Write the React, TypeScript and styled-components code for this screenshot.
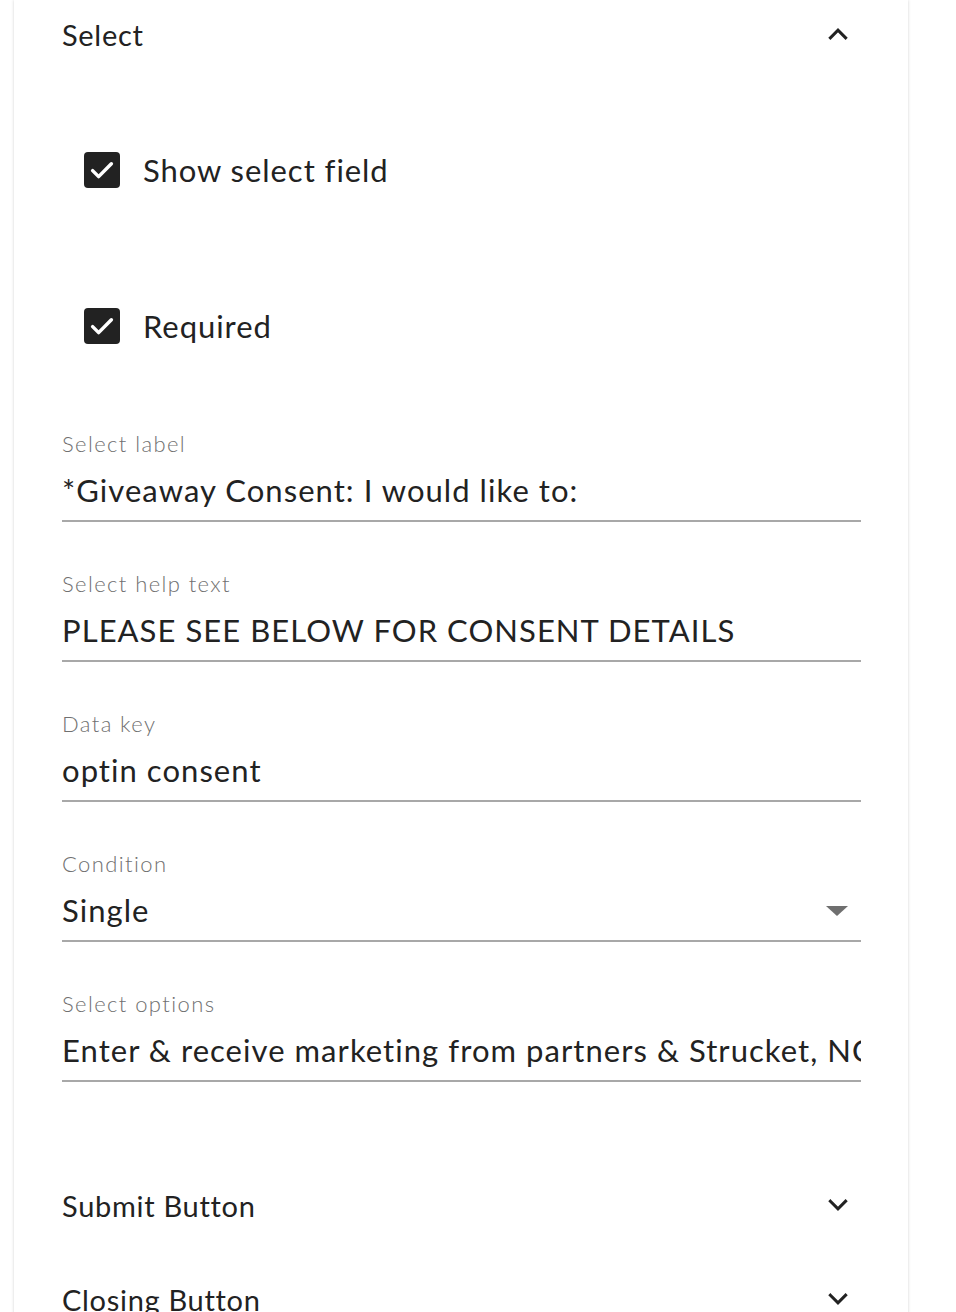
import styled, { createGlobalStyle } from "styled-components";

const GlobalStyle = createGlobalStyle`
  html, body {
    margin: 0;
    padding: 0;
    background: #ffffff;
  }
  body {
    font-family: Lato, "Noto Sans", "Liberation Sans", sans-serif;
    color: #222222;
  }
`;

const Page = styled.div`
  width: 956px;
  height: 1312px;
  overflow: hidden;
`;

const Panel = styled.section`
  margin-left: 14px;
  width: 894px;
  min-height: 1400px;
  padding: 0 47px 0 48px;
  box-sizing: border-box;
  background: #ffffff;
  box-shadow: 0 0 3px rgba(0, 0, 0, 0.18);
  display: flex;
  flex-direction: column;
`;

const AccordionRow = styled.div<{ $height: number }>`
  height: ${({ $height }) => $height}px;
  display: flex;
  align-items: center;
  justify-content: space-between;
  font-size: 29px;
  letter-spacing: 0.7px;
`;

const Chevron = styled.svg`
  width: 26px;
  height: 26px;
  margin-right: 10px;
`;

const CheckGroup = styled.div`
  margin-top: 74px;
  padding-left: 22px;
  display: flex;
  flex-direction: column;
  gap: 100px;
`;

const CheckRow = styled.label`
  height: 56px;
  display: flex;
  align-items: center;
  gap: 23px;
  font-size: 31px;
  letter-spacing: 0.95px;
`;

const Box = styled.span`
  width: 36px;
  height: 36px;
  border-radius: 4px;
  background: #222222;
  display: flex;
  align-items: center;
  justify-content: center;
`;

const Fields = styled.div`
  margin-top: 76px;
  display: flex;
  flex-direction: column;
  gap: 48px;
`;

const Field = styled.div`
  display: flex;
  flex-direction: column;
  gap: 12px;
  border-bottom: 2px solid #a8a8a8;
`;

const FieldLabel = styled.div`
  height: 28px;
  line-height: 28px;
  font-size: 22px;
  font-weight: 300;
  letter-spacing: 1.4px;
  color: #707070;
`;

const FieldValue = styled.div`
  height: 50px;
  line-height: 40px;
  font-size: 31px;
  letter-spacing: 1.05px;
  white-space: nowrap;
  overflow: hidden;
  display: flex;
  justify-content: space-between;
`;

const Caret = styled.span`
  width: 0;
  height: 0;
  margin: 16px 13px 0 0;
  border-left: 11px solid transparent;
  border-right: 11px solid transparent;
  border-top: 10px solid #6f6f6f;
`;

const Sections = styled.div`
  margin-top: 76px;
  display: flex;
  flex-direction: column;
`;

const Check = () => (
  <Box>
    <svg width="30" height="30" viewBox="0 0 24 24" fill="none">
      <path d="M4.5 12.5l4.8 4.8L19.5 7" stroke="#fff" strokeWidth="2.8" strokeLinecap="round" strokeLinejoin="round" />
    </svg>
  </Box>
);

const ChevronIcon = ({ up }: { up?: boolean }) => (
  <Chevron viewBox="0 0 24 24" fill="none">
    <path
      d={up ? "M5 15.5l7-7 7 7" : "M5 8.5l7 7 7-7"}
      stroke="#222"
      strokeWidth="2.8"
      strokeLinecap="square"
    />
  </Chevron>
);

const fields = [
  { label: "Select label", value: "*Giveaway Consent: I would like to:" },
  { label: "Select help text", value: "PLEASE SEE BELOW FOR CONSENT DETAILS" },
  { label: "Data key", value: "optin consent" },
  { label: "Condition", value: "Single", select: true },
  { label: "Select options", value: "Enter & receive marketing from partners & Strucket, NO thanks" },
];

const App = () => {
  return (
    <Page>
      <GlobalStyle />
      <Panel>
        <AccordionRow $height={68}>
          Select
          <ChevronIcon up />
        </AccordionRow>
        <CheckGroup>
          <CheckRow>
            <Check />
            Show select field
          </CheckRow>
          <CheckRow>
            <Check />
            Required
          </CheckRow>
        </CheckGroup>
        <Fields>
          {fields.map((f) => (
            <Field key={f.label}>
              <FieldLabel>{f.label}</FieldLabel>
              <FieldValue>
                {f.value}
                {f.select && <Caret />}
              </FieldValue>
            </Field>
          ))}
        </Fields>
        <Sections>
          <AccordionRow $height={94}>
            Submit Button
            <ChevronIcon />
          </AccordionRow>
          <AccordionRow $height={94}>
            Closing Button
            <ChevronIcon />
          </AccordionRow>
        </Sections>
      </Panel>
    </Page>
  );
};

export default App;
